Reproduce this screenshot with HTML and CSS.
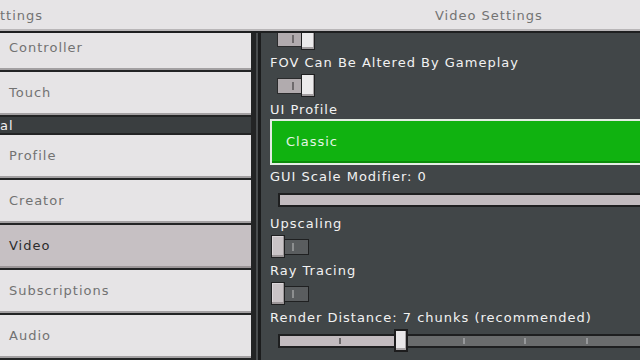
FILE: index.html
```html
<!DOCTYPE html>
<html>
<head>
<meta charset="utf-8">
<link rel="stylesheet" href="styles.css">
</head>
<body>
<div class="screen">
  <header class="topbar">
    <div class="topbar-left">ttings</div>
    <div class="topbar-title">Video Settings</div>
  </header>
  <div class="main">
    <nav class="sidebar">
      <div class="nav-list">
        <div class="nav-btn">Controller</div>
        <div class="nav-btn">Touch</div>
        <div class="nav-section">al</div>
        <div class="nav-btn">Profile</div>
        <div class="nav-btn">Creator</div>
        <div class="nav-btn selected">Video</div>
        <div class="nav-btn">Subscriptions</div>
        <div class="nav-btn">Audio</div>
      </div>
    </nav>
    <div class="divider"></div>
    <section class="panel">
      <div class="settings">
        <div class="toggle on"><span class="track"><i class="mark"></i></span><span class="knob"></span></div>
        <div class="setting">
          <div class="label">FOV Can Be Altered By Gameplay</div>
          <div class="toggle on"><span class="track"><i class="mark"></i></span><span class="knob"></span></div>
        </div>
        <div class="setting setting-dropdown">
          <div class="label">UI Profile</div>
          <div class="dropdown">Classic</div>
        </div>
        <div class="setting">
          <div class="label">GUI Scale Modifier: 0</div>
          <div class="slider"><div class="slider-track"><div class="slider-fill" style="width:100%"></div></div></div>
        </div>
        <div class="setting">
          <div class="label">Upscaling</div>
          <div class="toggle off"><span class="track"><i class="mark"></i></span><span class="knob"></span></div>
        </div>
        <div class="setting">
          <div class="label">Ray Tracing</div>
          <div class="toggle off"><span class="track"><i class="mark"></i></span><span class="knob"></span></div>
        </div>
        <div class="setting">
          <div class="label">Render Distance: 7 chunks (recommended)</div>
          <div class="slider">
            <div class="slider-track">
              <div class="slider-fill" style="width:114px"></div>
              <i class="tick lit" style="left:59px"></i>
              <i class="tick" style="left:121px"></i>
              <i class="tick" style="left:183px"></i>
              <i class="tick" style="left:244px"></i>
              <i class="tick" style="left:306px"></i>
            </div>
            <span class="slider-knob" style="left:116px"></span>
          </div>
        </div>
      </div>
    </section>
  </div>
</div>
</body>
</html>
```
FILE: styles.css
```css
* { box-sizing: border-box; }
html, body { margin: 0; padding: 0; }
body {
  width: 640px;
  height: 360px;
  overflow: hidden;
  font-family: "DejaVu Sans", "Noto Sans", sans-serif;
  font-size: 13px;
  letter-spacing: 1px;
  background: #232425;
}
.screen {
  width: 640px;
  height: 360px;
  display: flex;
  flex-direction: column;
  overflow: hidden;
}
.topbar {
  flex: none;
  height: 33px;
  background: #e6e4e6;
  border-bottom: 2px solid #1e1f20;
  box-shadow: inset 0 -2px 0 #b9b6b8;
  display: flex;
  align-items: center;
  color: #737373;
  white-space: nowrap;
  overflow: hidden;
}
.topbar-left {
  width: 258px;
  flex: none;
  padding-bottom: 1px;
}
.topbar-title {
  flex: 1;
  padding-left: 177px;
  padding-bottom: 1px;
}
.main {
  flex: 1;
  display: flex;
  overflow: hidden;
}
.sidebar {
  width: 256px;
  flex: none;
  background: #232425;
  overflow: hidden;
}
.nav-list {
  width: 251px;
  margin-top: -6px;
  display: flex;
  flex-direction: column;
  gap: 2px;
}
.nav-btn {
  height: 43px;
  flex: none;
  background: #e6e4e6;
  border-bottom: 2px solid #a3a0a2;
  display: flex;
  align-items: center;
  padding-left: 9px;
  color: #727272;
  white-space: nowrap;
}
.nav-btn.selected {
  background: #c6c0c3;
  border-bottom-color: #9c9698;
  color: #2c2c2c;
}
.nav-section {
  height: 16px;
  flex: none;
  background: #3a3e40;
  color: #f0f0f0;
  line-height: 16px;
  padding-top: 1px;
}
.divider {
  width: 2px;
  flex: none;
  background: #4a4d4f;
}
.panel {
  flex: 1;
  background: #414648;
  border-left: 3px solid #1b1c1d;
  padding-left: 9px;
  overflow: hidden;
}
.settings {
  margin-top: -6px;
  display: flex;
  flex-direction: column;
  gap: 5px;
}
.setting {
  display: flex;
  flex-direction: column;
  gap: 3px;
}
.setting-dropdown {
  gap: 1px;
  margin-bottom: -1px;
}
.label {
  height: 16px;
  line-height: 16px;
  color: #f2f2f2;
  white-space: nowrap;
}
.toggle {
  position: relative;
  width: 32px;
  height: 23px;
  margin-left: 7px;
  display: flex;
  align-items: center;
  flex: none;
}
.track {
  width: 32px;
  height: 16px;
  border: 1px solid #2a2b2c;
  display: flex;
  align-items: center;
  justify-content: center;
}
.mark {
  width: 2px;
  height: 8px;
}
.toggle.on .track { background: #b1abae; }
.toggle.on .mark { background: #6e6a6c; }
.toggle.off .track { background: #5a5d5f; border-color: #1f2021; }
.toggle.off .mark { background: #8d8f90; }
.knob {
  position: absolute;
  top: 0;
  width: 14px;
  height: 23px;
  border: 1px solid #1f2021;
  box-shadow: inset -1px -2px 0 #a29ea0;
}
.toggle.on .knob { left: 24px; background: #ecebec; }
.toggle.off .knob { left: -6px; background: #c9c3c6; box-shadow: inset -1px -2px 0 #9c9698, inset 1px 1px 0 #dcd7da; }
.dropdown {
  height: 46px;
  background: #10b210;
  border: 2px solid #e3ece3;
  border-right: none;
  box-shadow: inset 0 -2px 0 #0a8c0a;
  display: flex;
  align-items: center;
  padding-left: 14px;
  padding-bottom: 1px;
  color: #e4f5e4;
}
.slider {
  position: relative;
  height: 23px;
  margin-left: 8px;
  display: flex;
  align-items: center;
}
.slider-track {
  position: relative;
  width: 100%;
  height: 14px;
  border: 2px solid #1e1f20;
  border-right: none;
  background: #6a6c6d;
}
.slider-fill {
  height: 100%;
  background: #c2bbbf;
}
.tick {
  position: absolute;
  top: 2px;
  width: 2px;
  height: 6px;
  background: #96989a;
}
.tick.lit { background: #6c696b; }
.slider-knob {
  position: absolute;
  top: 0;
  width: 14px;
  height: 23px;
  background: #e8e6e8;
  border: 2px solid #1d1d1e;
  box-shadow: inset -1px -2px 0 #aaa6a8;
}
```
